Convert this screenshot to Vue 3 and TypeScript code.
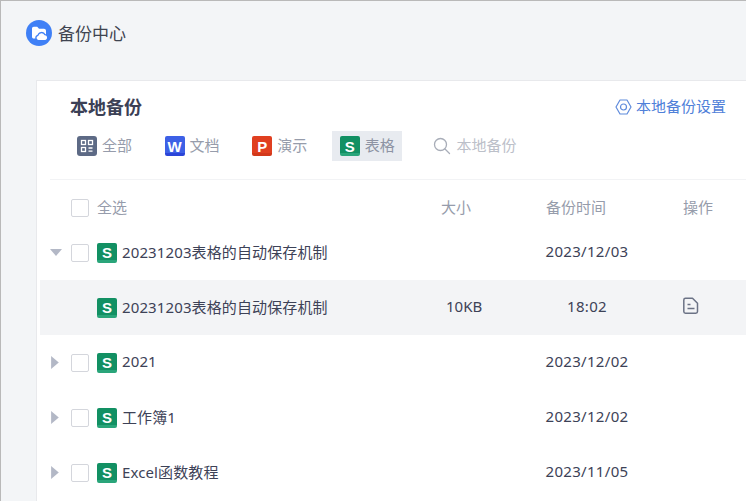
<script setup lang="ts">
interface Tab { label: string; letter: string; cls: string }
interface Row { name: string; date: string; arrow: 'down' | 'right' }
const tabs: Tab[] = [
  { label: '全部', letter: '', cls: 'all' },
  { label: '文档', letter: 'W', cls: 'word' },
  { label: '演示', letter: 'P', cls: 'ppt' },
  { label: '表格', letter: 'S', cls: 'sheet' }
]
const rowsAfter: Row[] = [
  { name: '2021', date: '2023/12/02', arrow: 'right' },
  { name: '工作簿1', date: '2023/12/02', arrow: 'right' },
  { name: 'Excel函数教程', date: '2023/11/05', arrow: 'right' }
]
</script>

<template>
  <div class="win">
    <header class="top">
      <svg class="logo" width="26" height="26" viewBox="0 0 26 26">
        <circle cx="13" cy="13" r="13" fill="#3f80f6" />
        <path d="M6 8.500C6 7.400 6.800 6.700 7.800 6.700h3.400l1.800 2h5c1.100 0 2 .9 2 2v6c0 1-.8 1.800-1.800 1.800H7.800c-1 0-1.800-.8-1.800-1.800z" fill="#fff" />
        <path d="M12.300 20.600a2.700 2.700 0 0 1-.4-5.300 3.800 3.800 0 0 1 7.100-.6 3 3 0 0 1 .5 5.900z" fill="#fff" stroke="#3f80f6" stroke-width="1.300" />
      </svg>
      <span class="top-title">备份中心</span>
    </header>

    <main class="card">
      <div class="card-head">
        <h1>本地备份</h1>
        <a class="settings">
          <svg width="17" height="16" viewBox="0 0 17 16" fill="none" stroke="#5f8bdc" stroke-width="1.200">
            <path d="M5 1h7l4 7-4 7H5L1 8z" stroke-linejoin="round" />
            <circle cx="8.500" cy="8" r="3" />
          </svg>
          <span class="lbl">本地备份设置</span>
        </a>
      </div>

      <div class="tabs">
        <div v-for="t in tabs" :key="t.label" class="tab" :class="{ active: t.cls === 'sheet' }">
          <span class="ficon" :class="t.cls">
            <svg v-if="t.cls === 'all'" width="14" height="14" viewBox="0 0 14 14" fill="none" stroke="#fff" stroke-width="1.300">
              <rect x="1.500" y="1.500" width="4" height="4" />
              <rect x="8.500" y="1.500" width="4" height="4" />
              <rect x="1.500" y="8.500" width="4" height="4" />
              <path d="M8.500 9h4M8.500 12.200h4" />
            </svg>
            <template v-else>{{ t.letter }}</template>
          </span>
          <span class="lbl">{{ t.label }}</span>
        </div>
        <div class="search">
          <svg width="18" height="18" viewBox="0 0 18 18" fill="none" stroke="#a8adb8" stroke-width="1.300">
            <circle cx="7.500" cy="7.500" r="6" />
            <path d="M12 12l4.500 4.500" stroke-linecap="round" />
          </svg>
          <span class="lbl">本地备份</span>
        </div>
      </div>

      <div class="divider"></div>

      <div class="thead">
        <div class="name-cell head-name">
          <span class="check"></span>
          <span class="lbl">全选</span>
        </div>
        <span class="lbl">大小</span>
        <span class="lbl">备份时间</span>
        <span class="lbl">操作</span>
      </div>

      <div class="row">
        <div class="name-cell">
          <span class="tri down"></span>
          <span class="check"></span>
          <span class="ficon small sheet">S</span>
          <span class="lbl fname">20231203表格的自动保存机制</span>
        </div>
        <span></span>
        <span class="lbl time">2023/12/03</span>
        <span></span>
      </div>

      <div class="row child">
        <div class="name-cell">
          <span class="tri none"></span>
          <span class="check none"></span>
          <span class="ficon small sheet">S</span>
          <span class="lbl fname">20231203表格的自动保存机制</span>
        </div>
        <span class="lbl">10KB</span>
        <span class="lbl time">18:02</span>
        <svg class="doc" width="18" height="18" viewBox="0 0 18 18" fill="none" stroke="#6b7285" stroke-width="1.500">
          <path d="M3.500 1.300h7l5 5v8.200a1.700 1.700 0 0 1-1.700 1.700H3.500a1.700 1.700 0 0 1-1.700-1.700V3a1.700 1.700 0 0 1 1.700-1.700z" stroke-linejoin="round" />
          <path d="M5.500 7.500h3M5.500 11.500h7" />
        </svg>
      </div>

      <div v-for="r in rowsAfter" :key="r.name" class="row">
        <div class="name-cell">
          <span class="tri right"></span>
          <span class="check"></span>
          <span class="ficon small sheet">S</span>
          <span class="lbl fname">{{ r.name }}</span>
        </div>
        <span></span>
        <span class="lbl time">{{ r.date }}</span>
        <span></span>
      </div>
    </main>
  </div>
</template>

<style>
html, body { margin: 0; height: 100%; overflow: hidden; }
</style>

<style scoped>
.win {
  width: 746px;
  height: 501px;
  box-sizing: border-box;
  overflow: hidden;
  background: #f3f5f7;
  border-top: 1px solid #b9b9b9;
  border-left: 1px solid #b9b9b9;
  font-family: "Noto Sans", "Noto Sans CJK SC", sans-serif;
  color: #3d4257;
  font-size: 15px;
}
.top {
  display: flex;
  align-items: center;
  gap: 6px;
  height: 26px;
  padding: 19px 0 0 25px;
}
.logo { flex: none; }
.top-title { font-size: 17px; color: #3f4450; padding-bottom: 2px; }
.card {
  margin: 34px -30px 0 35px;
  height: 440px;
  background: #fff;
  border: 1px solid #e8e9ec;
}
.card-head {
  display: flex;
  align-items: center;
  justify-content: space-between;
  height: 28px;
  padding: 12px 49px 0 33px;
}
h1 {
  margin: 0 0 2px;
  font-size: 18px;
  font-weight: 700;
  color: #3b4055;
}
.settings {
  display: flex;
  align-items: center;
  gap: 4px;
  color: #4f80d9;
}
.lbl { padding-bottom: 3px; }
.tabs {
  display: flex;
  align-items: center;
  margin: 10px 0 0 32px;
  height: 30px;
  color: #969cab;
}
.tab {
  display: flex;
  align-items: center;
  gap: 5px;
  padding: 0 7px 0 8px;
  height: 30px;
  margin-right: 17.600px;
}
.tab.active {
  background: #e8ebf0;
  color: #8d93a3;
}
.ficon {
  display: flex;
  align-items: center;
  justify-content: center;
  width: 20px;
  height: 20px;
  border-radius: 2px;
  color: #fff;
  font-weight: 700;
  font-size: 15px;
  flex: none;
  font-family: "Liberation Sans", sans-serif;
}
.ficon.all { background: #5d6a85; border-radius: 3px; }
.ficon.word { background: linear-gradient(#3d60e6 85%, #2b45d8 85%); }
.ficon.ppt { background: linear-gradient(#e03f20 85%, #d2381a 85%); }
.ficon.sheet { background: linear-gradient(#129063 85%, #2aa57a 85%); }
.search {
  display: flex;
  align-items: center;
  gap: 5px;
  margin-left: 14px;
  color: #bcc0c9;
}
.divider {
  height: 1px;
  background: #f2f3f5;
  margin: 18px 8px 0 13px;
}
.thead {
  display: grid;
  grid-template-columns: 401px 105px 137px 1fr;
  align-items: center;
  box-sizing: border-box;
  height: 45px;
  padding-top: 10px;
  margin-left: 3px;
  color: #969cab;
}
.name-cell {
  display: flex;
  align-items: center;
}
.head-name { padding-left: 31px; }
.head-name .check { margin-right: 8px; }
.row {
  display: grid;
  grid-template-columns: 406px 99px 84px 54px 1fr;
  align-items: center;
  height: 55px;
  margin-left: 3px;
  color: #3d4257;
}
.row .name-cell { padding-left: 10px; }
.row.child { background: #f3f4f6; }
.fname { letter-spacing: 0.120px; }
.time { text-align: center; letter-spacing: 0.300px; }
.tri {
  width: 11px;
  height: 10px;
  margin-right: 10px;
  flex: none;
}
.tri.none { visibility: hidden; }
.tri.down {
  background: #b3b8c6;
  clip-path: polygon(0 15%, 100% 15%, 50% 85%);
  width: 12px;
  margin-right: 9px;
}
.tri.right {
  background: #b3b8c6;
  clip-path: polygon(10% 0, 80% 50%, 10% 100%);
  height: 13px;
}
.check {
  width: 16px;
  height: 16px;
  border: 1px solid #d4d6dc;
  border-radius: 2px;
  background: #fff;
  margin-right: 8px;
  flex: none;
}
.check.none { visibility: hidden; }
.ficon.small { margin-right: 5px; }
.doc { grid-column: 4 / 5; margin-top: -4px; margin-left: 53px; }
</style>
